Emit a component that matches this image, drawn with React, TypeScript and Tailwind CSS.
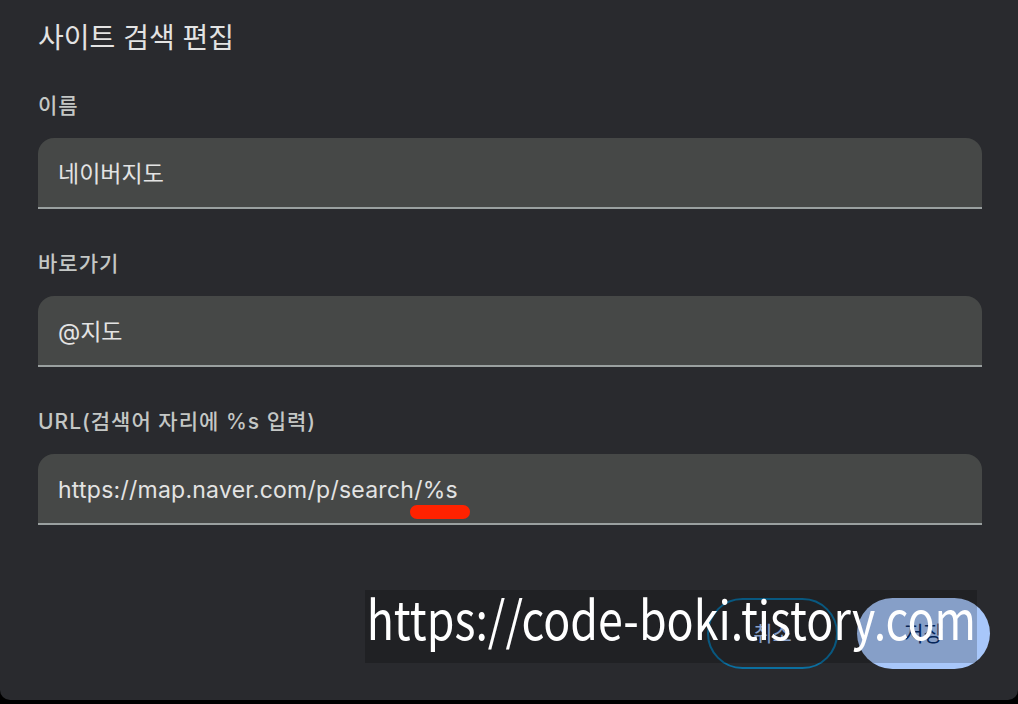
import React from "react";

const font = { fontFamily: 'Inter, "Noto Sans CJK KR", sans-serif' };

function Field({ label, value, mark, url }: { label: string; value: string; mark?: boolean; url?: boolean }) {
  return (
    <div className="flex flex-col">
      <div className="text-[21px] leading-[24px] tracking-[1px] font-medium text-[#c4c7c5] h-[24px]">{label}</div>
      <div className="mt-[20px] relative h-[71px] bg-[#464847] rounded-t-[16px] border-b-2 border-[#9aa0a0] flex items-center px-[20px]">
        <span className={url ? "text-[23px] tracking-[0.25px] text-[#e3e3e3] relative top-[2px]" : "text-[23px] text-[#e3e3e3] relative top-[2px]"}>{value}</span>
        {mark && (
          <div className="absolute left-[372px] top-[51px] w-[60px] h-[14px] rounded-full bg-[#ff2200]" />
        )}
      </div>
    </div>
  );
}

export default function App() {
  return (
    <div className="w-[1018px] h-[704px] bg-black overflow-hidden" style={font}>
      <div className="relative h-[700px] bg-[#292a2e] rounded-b-[10px] px-[38px] pt-[20px] flex flex-col">
        <h1 className="text-[28px] leading-[36px] text-[#e3e3e3] font-normal">사이트 검색 편집</h1>
        <div className="mt-[38px] flex flex-col gap-[43px] w-[944px]">
          <Field label="이름" value="네이버지도" />
          <Field label="바로가기" value="@지도" />
          <Field label="URL(검색어 자리에 %s 입력)" value="https://map.naver.com/p/search/%s" mark url />
        </div>
        <div className="mt-[73px] flex justify-end gap-[19px] mr-[-10px]">
          <button className="w-[131px] h-[71px] rounded-full border-2 border-[#0b6fa0] text-[#a8c7fa] text-[21px]">취소</button>
          <button className="w-[133px] h-[71px] rounded-full bg-[#a8c7fa] text-[#062e6f] text-[21px]">저장</button>
        </div>
        <div className="absolute left-[365px] top-[590px] w-[612px] h-[73px] bg-black/20 flex items-start">
          <span
            className="text-white text-[53px] leading-none whitespace-nowrap pl-[2px] pt-[1px] scale-x-[0.845] origin-left inline-block"
            style={{ fontFamily: '"Noto Sans CJK KR", sans-serif' }}
          >
            https://code-boki.tistory.com
          </span>
        </div>
      </div>
    </div>
  );
}
